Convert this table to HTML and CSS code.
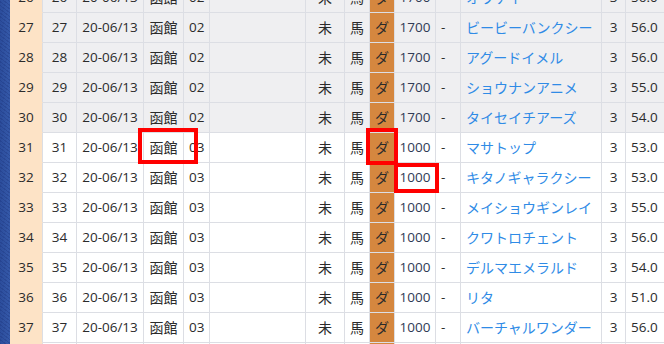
FILE: index.html
```html
<!DOCTYPE html>
<html lang="ja">
<head>
<meta charset="utf-8">
<link rel="stylesheet" href="styles.css">
</head>
<body>
<div class="screen">
  <div class="sidebar"></div>
  <div class="sheet">
    <div class="row gray"><div class="idx">26</div><div>26</div><div>20-06/13</div><div class="jp">函館</div><div class="l">02</div><div></div><div class="jp">未</div><div class="jp">馬</div><div class="jp surf">ダ</div><div class="dist">1700</div><div class="l">-</div><div class="jp name">オウケイ</div><div>3</div><div class="l">56.0</div></div>
    <div class="row gray"><div class="idx">27</div><div>27</div><div>20-06/13</div><div class="jp">函館</div><div class="l">02</div><div></div><div class="jp">未</div><div class="jp">馬</div><div class="jp surf">ダ</div><div class="dist">1700</div><div class="l">-</div><div class="jp name">ビービーバンクシー</div><div>3</div><div class="l">56.0</div></div>
    <div class="row gray"><div class="idx">28</div><div>28</div><div>20-06/13</div><div class="jp">函館</div><div class="l">02</div><div></div><div class="jp">未</div><div class="jp">馬</div><div class="jp surf">ダ</div><div class="dist">1700</div><div class="l">-</div><div class="jp name">アグードイメル</div><div>3</div><div class="l">56.0</div></div>
    <div class="row gray"><div class="idx">29</div><div>29</div><div>20-06/13</div><div class="jp">函館</div><div class="l">02</div><div></div><div class="jp">未</div><div class="jp">馬</div><div class="jp surf">ダ</div><div class="dist">1700</div><div class="l">-</div><div class="jp name">ショウナンアニメ</div><div>3</div><div class="l">55.0</div></div>
    <div class="row gray"><div class="idx">30</div><div>30</div><div>20-06/13</div><div class="jp">函館</div><div class="l">02</div><div></div><div class="jp">未</div><div class="jp">馬</div><div class="jp surf">ダ</div><div class="dist">1700</div><div class="l">-</div><div class="jp name">タイセイチアーズ</div><div>3</div><div class="l">54.0</div></div>
    <div class="row"><div class="idx">31</div><div>31</div><div>20-06/13</div><div class="jp">函館</div><div class="l">03</div><div></div><div class="jp">未</div><div class="jp">馬</div><div class="jp surf">ダ</div><div class="dist">1000</div><div class="l">-</div><div class="jp name">マサトップ</div><div>3</div><div class="l">53.0</div></div>
    <div class="row"><div class="idx">32</div><div>32</div><div>20-06/13</div><div class="jp">函館</div><div class="l">03</div><div></div><div class="jp">未</div><div class="jp">馬</div><div class="jp surf">ダ</div><div class="dist">1000</div><div class="l">-</div><div class="jp name">キタノギャラクシー</div><div>3</div><div class="l">53.0</div></div>
    <div class="row"><div class="idx">33</div><div>33</div><div>20-06/13</div><div class="jp">函館</div><div class="l">03</div><div></div><div class="jp">未</div><div class="jp">馬</div><div class="jp surf">ダ</div><div class="dist">1000</div><div class="l">-</div><div class="jp name">メイショウギンレイ</div><div>3</div><div class="l">55.0</div></div>
    <div class="row"><div class="idx">34</div><div>34</div><div>20-06/13</div><div class="jp">函館</div><div class="l">03</div><div></div><div class="jp">未</div><div class="jp">馬</div><div class="jp surf">ダ</div><div class="dist">1000</div><div class="l">-</div><div class="jp name">クワトロチェント</div><div>3</div><div class="l">56.0</div></div>
    <div class="row"><div class="idx">35</div><div>35</div><div>20-06/13</div><div class="jp">函館</div><div class="l">03</div><div></div><div class="jp">未</div><div class="jp">馬</div><div class="jp surf">ダ</div><div class="dist">1000</div><div class="l">-</div><div class="jp name">デルマエメラルド</div><div>3</div><div class="l">54.0</div></div>
    <div class="row"><div class="idx">36</div><div>36</div><div>20-06/13</div><div class="jp">函館</div><div class="l">03</div><div></div><div class="jp">未</div><div class="jp">馬</div><div class="jp surf">ダ</div><div class="dist">1000</div><div class="l">-</div><div class="jp name">リタ</div><div>3</div><div class="l">51.0</div></div>
    <div class="row"><div class="idx">37</div><div>37</div><div>20-06/13</div><div class="jp">函館</div><div class="l">03</div><div></div><div class="jp">未</div><div class="jp">馬</div><div class="jp surf">ダ</div><div class="dist">1000</div><div class="l">-</div><div class="jp name">バーチャルワンダー</div><div>3</div><div class="l">56.0</div></div>
    <div class="row"><div class="idx">38</div><div>38</div><div>20-06/13</div><div class="jp">函館</div><div class="l">03</div><div></div><div class="jp">未</div><div class="jp">馬</div><div class="jp surf">ダ</div><div class="dist">1000</div><div class="l">-</div><div class="jp name">ラブリーエンジェル</div><div>3</div><div class="l">54.0</div></div>
  </div>
  <div class="mark mark-place"></div>
  <div class="mark mark-surf"></div>
  <div class="mark mark-dist"></div>
</div>
</body>
</html>
```

FILE: styles.css
```css
html, body {
  margin: 0;
  padding: 0;
  background: #ffffff;
  overflow: hidden;
}

.screen {
  position: relative;
  display: flex;
  align-items: flex-start;
  height: 344px;
  overflow: hidden;
}

.sidebar {
  flex: none;
  width: 10px;
  height: 344px;
  background:
    repeating-linear-gradient(37deg, rgba(20, 40, 110, 0.25) 0 1px, transparent 1px 3px),
    linear-gradient(90deg, #2c4d9c, #3559a9);
}

.sheet {
  flex: none;
  margin-top: -17px;
}

.row {
  display: grid;
  grid-template-columns: 33px 34px 67px 40px 26px 96px 39px 25px 25px 41px 25px 141px 24px 60px;
  height: 30px;
  background: #ffffff;
}

.row.gray {
  background: #efeff1;
}

.row > div {
  box-sizing: border-box;
  height: 30px;
  border-right: 1px solid #dcdee4;
  border-bottom: 1px solid #dcdee4;
  line-height: 29px;
  text-align: center;
  white-space: nowrap;
  overflow: hidden;
  font-family: "Open Sans", "Noto Sans CJK JP", sans-serif;
  font-size: 13.5px;
  color: #2b2b2b;
}

.row > .l {
  text-align: left;
  padding-left: 5px;
}

.row > .jp {
  font-family: "Noto Sans CJK JP", sans-serif;
  font-size: 14px;
}

.row > .idx {
  background: #fde3c6;
  border-bottom-color: #fde3c6;
}

.row > .surf {
  background: #d5873f;
  color: #2b2b2b;
}

.row > .dist {
  color: #2f3b55;
}

.row > .name {
  text-align: left;
  padding-left: 5px;
  color: #2f8be6;
}

.mark {
  position: absolute;
  box-sizing: border-box;
  border: 4px solid #ff0000;
}

.mark-place {
  left: 138px;
  top: 128px;
  width: 60px;
  height: 36px;
}

.mark-surf {
  left: 366px;
  top: 128px;
  width: 32px;
  height: 37px;
}

.mark-dist {
  left: 394px;
  top: 163px;
  width: 45px;
  height: 30px;
}
```
